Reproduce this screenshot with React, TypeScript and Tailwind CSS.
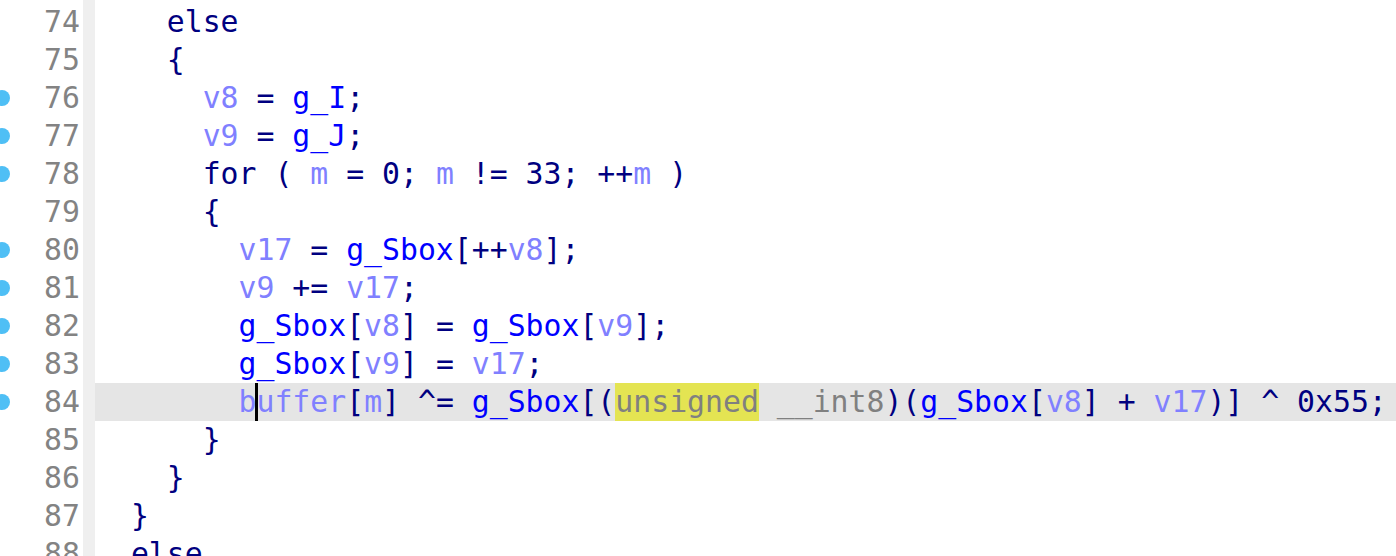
import React from "react"

type Tok = [string, string]

type Line = { n: number; dot?: boolean; hl?: boolean; toks: Tok[] }

const tone: Record<string, string> = {
    p: "text-[#000080]",
    g: "text-[#0000ff]",
    v: "text-[#8080ff]",
    t: "text-[#808080]",
    y: "text-[#808080] bg-[#e4e452] inline-block h-[38px] align-top",
    c: "",
}

const lines: Line[] = [
    { n: 73, toks: [["    }", "p"]] },
    { n: 74, toks: [["    else", "p"]] },
    { n: 75, toks: [["    {", "p"]] },
    { n: 76, dot: true, toks: [["      ", "p"], ["v8", "v"], [" = ", "p"], ["g_I", "g"], [";", "p"]] },
    { n: 77, dot: true, toks: [["      ", "p"], ["v9", "v"], [" = ", "p"], ["g_J", "g"], [";", "p"]] },
    {
        n: 78,
        dot: true,
        toks: [
            ["      for ( ", "p"], ["m", "v"], [" = 0; ", "p"], ["m", "v"], [" != 33; ++", "p"], ["m", "v"], [" )", "p"],
        ],
    },
    { n: 79, toks: [["      {", "p"]] },
    {
        n: 80,
        dot: true,
        toks: [["        ", "p"], ["v17", "v"], [" = ", "p"], ["g_Sbox", "g"], ["[++", "p"], ["v8", "v"], ["];", "p"]],
    },
    { n: 81, dot: true, toks: [["        ", "p"], ["v9", "v"], [" += ", "p"], ["v17", "v"], [";", "p"]] },
    {
        n: 82,
        dot: true,
        toks: [
            ["        ", "p"], ["g_Sbox", "g"], ["[", "p"], ["v8", "v"], ["] = ", "p"], ["g_Sbox", "g"], ["[", "p"], ["v9", "v"], ["];", "p"],
        ],
    },
    {
        n: 83,
        dot: true,
        toks: [["        ", "p"], ["g_Sbox", "g"], ["[", "p"], ["v9", "v"], ["] = ", "p"], ["v17", "v"], [";", "p"]],
    },
    {
        n: 84,
        dot: true,
        hl: true,
        toks: [
            ["        ", "p"], ["b", "v"], ["", "c"], ["uffer", "v"], ["[", "p"], ["m", "v"], ["] ^= ", "p"], ["g_Sbox", "g"], ["[(", "p"],
            ["unsigned", "y"], [" __int8", "t"], [")(", "p"], ["g_Sbox", "g"], ["[", "p"], ["v8", "v"], ["] + ", "p"], ["v17", "v"],
            [")] ^ 0x55;", "p"],
        ],
    },
    { n: 85, toks: [["      }", "p"]] },
    { n: 86, toks: [["    }", "p"]] },
    { n: 87, toks: [["  }", "p"]] },
    { n: 88, toks: [["  else", "p"]] },
]

function Caret() {
    return (
        <span className="relative inline-block w-0 h-[38px] align-top">
            <span className="absolute left-[-1px] top-0 w-[3px] h-[38px] bg-black" />
        </span>
    )
}

export default function App() {
    return (
        <div
            className="w-[1396px] h-[556px] overflow-hidden bg-white text-[29.8px] leading-[38px]"
            style={{ fontFamily: '"DejaVu Sans Mono", "Liberation Mono", monospace' }}
        >
            <div className="-mt-[35px] flex flex-col">
                {lines.map((l) => (
                    <div key={l.n} className="flex h-[38px]">
                        {/* gutter: breakpoint dot + line number */}
                        <div className="relative w-[83px] shrink-0 pr-[3px] text-right text-[#838383]">
                            {l.dot && (
                                <span className="absolute left-[-6px] top-[11px] w-[16px] h-[16px] rounded-full bg-[#4fbff5]" />
                            )}
                            {l.n}
                        </div>
                        <div className="w-[12px] shrink-0 bg-[#efefef]" />
                        <div className={`flex-1 whitespace-pre ${l.hl ? "bg-[#e5e5e5]" : ""}`}>
                            {l.toks.map(([s, k], i) =>
                                k === "c" ? (
                                    <Caret key={i} />
                                ) : (
                                    <span key={i} className={tone[k]}>
                                        {s}
                                    </span>
                                )
                            )}
                        </div>
                    </div>
                ))}
            </div>
        </div>
    )
}
